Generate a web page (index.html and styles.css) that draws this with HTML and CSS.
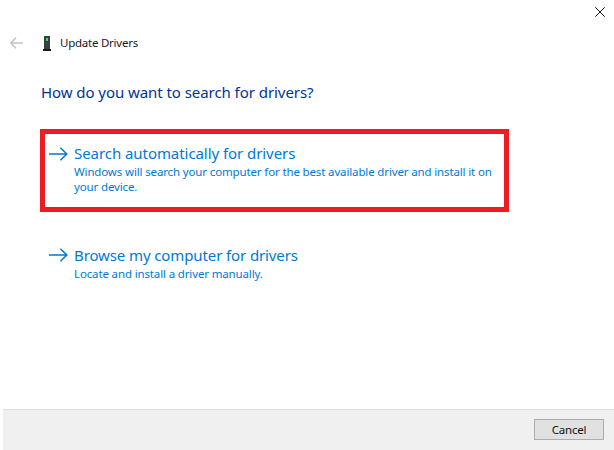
FILE: index.html
```html
<!DOCTYPE html>
<html lang="en">
<head>
<meta charset="utf-8">
<title>Update Drivers</title>
<link rel="stylesheet" href="styles.css">
</head>
<body>
<div class="window">
  <div class="titlebar">
    <svg class="close" width="10" height="10" viewBox="0 0 10 10"><path d="M0.3 0.3L9.7 9.7M9.7 0.3L0.3 9.7" stroke="#111" stroke-width="1" fill="none"/></svg>
  </div>
  <div class="header">
    <svg class="back" width="13" height="12" viewBox="0 0 13 12"><path d="M13 6H1M6 0.8L0.9 6L6 11.2" stroke="#c4c4c4" stroke-width="1.6" fill="none"/></svg>
    <svg class="device" width="8" height="15" viewBox="0 0 8 15"><rect x="1" y="0" width="6" height="13" fill="#3a3f44"/><rect x="0" y="13" width="8" height="2" fill="#16181a"/><rect x="3" y="2" width="2" height="3" fill="#2fe04a"/></svg>
    <span class="header-title">Update Drivers</span>
  </div>
  <main class="content">
    <h1 class="question">How do you want to search for drivers?</h1>
    <div class="option option-highlight">
      <svg class="arrow arrow-first" width="19" height="14" viewBox="0 0 19 14"><path d="M0 7H17.6M11.4 0.7L17.8 7L11.4 13.3" stroke="#0078d7" stroke-width="1.5" fill="none"/></svg>
      <div class="option-text">
        <div class="option-title">Search automatically for drivers</div>
        <div class="option-desc">Windows will search your computer for the best available driver and install it on your device.</div>
      </div>
    </div>
    <div class="option option-plain">
      <svg class="arrow" width="19" height="14" viewBox="0 0 19 14"><path d="M0 7H17.6M11.4 0.7L17.8 7L11.4 13.3" stroke="#0078d7" stroke-width="1.5" fill="none"/></svg>
      <div class="option-text">
        <div class="option-title option-title-browse">Browse my computer for drivers</div>
        <div class="option-desc">Locate and install a driver manually.</div>
      </div>
    </div>
  </main>
  <footer class="footer">
    <button class="cancel" type="button">Cancel</button>
  </footer>
</div>
</body>
</html>
```
FILE: styles.css
```css
html, body {
  margin: 0;
  padding: 0;
  background: #fff;
}
.window {
  width: 614px;
  height: 450px;
  display: flex;
  flex-direction: column;
  overflow: hidden;
  font-family: "Noto Sans", "Open Sans", sans-serif;
}
.titlebar {
  height: 35px;
  flex: none;
  display: flex;
  justify-content: flex-end;
  align-items: flex-start;
  padding: 7px 9px 0 0;
  box-sizing: border-box;
}
.close { display: block; }
.header {
  height: 16px;
  flex: none;
  display: flex;
  align-items: center;
  padding-left: 10px;
}
.back { margin-right: 20px; }
.device { margin-right: 9px; }
.header-title {
  font-size: 11.5px;
  letter-spacing: -0.24px;
  color: #1a1a1a;
  padding-bottom: 2px;
}
.content {
  flex: 1;
  padding: 30px 105px 0 40px;
}
.question {
  margin: 0 0 26px 1px;
  font-size: 15px;
  line-height: 22px;
  font-weight: 400;
  letter-spacing: -0.06px;
  color: #003399;
}
.option {
  display: flex;
  align-items: flex-start;
  box-sizing: border-box;
  width: 469px;
}
.option-highlight {
  height: 83px;
  border: 5px solid #ed1c24;
  padding: 8px 4px 0 4px;
  margin-bottom: 32px;
}
.option-plain {
  padding: 0 9px;
}
.arrow {
  flex: none;
  margin: 4px 6px 0 0;
}
.arrow-first { margin-top: 5px; }
.option-text { flex: 1; }
.option-title {
  font-size: 15px;
  line-height: 22px;
  letter-spacing: -0.06px;
  color: #0078d7;
}
.option-title-browse { letter-spacing: -0.11px; }
.option-desc {
  font-size: 11.5px;
  line-height: 15px;
  letter-spacing: -0.14px;
  color: #0078d7;
}
.footer {
  height: 41px;
  flex: none;
  margin-left: 3px;
  box-sizing: border-box;
  background: #f0f0f0;
  border-top: 1px solid #dfdfdf;
  display: flex;
  justify-content: flex-end;
  padding: 9px 10px 0 0;
}
.cancel {
  width: 70px;
  height: 21px;
  box-sizing: border-box;
  border: 1px solid #adadad;
  background: #e1e1e1;
  padding: 0;
  font-family: inherit;
  font-size: 11.5px;
  letter-spacing: -0.2px;
  color: #111;
}
```
